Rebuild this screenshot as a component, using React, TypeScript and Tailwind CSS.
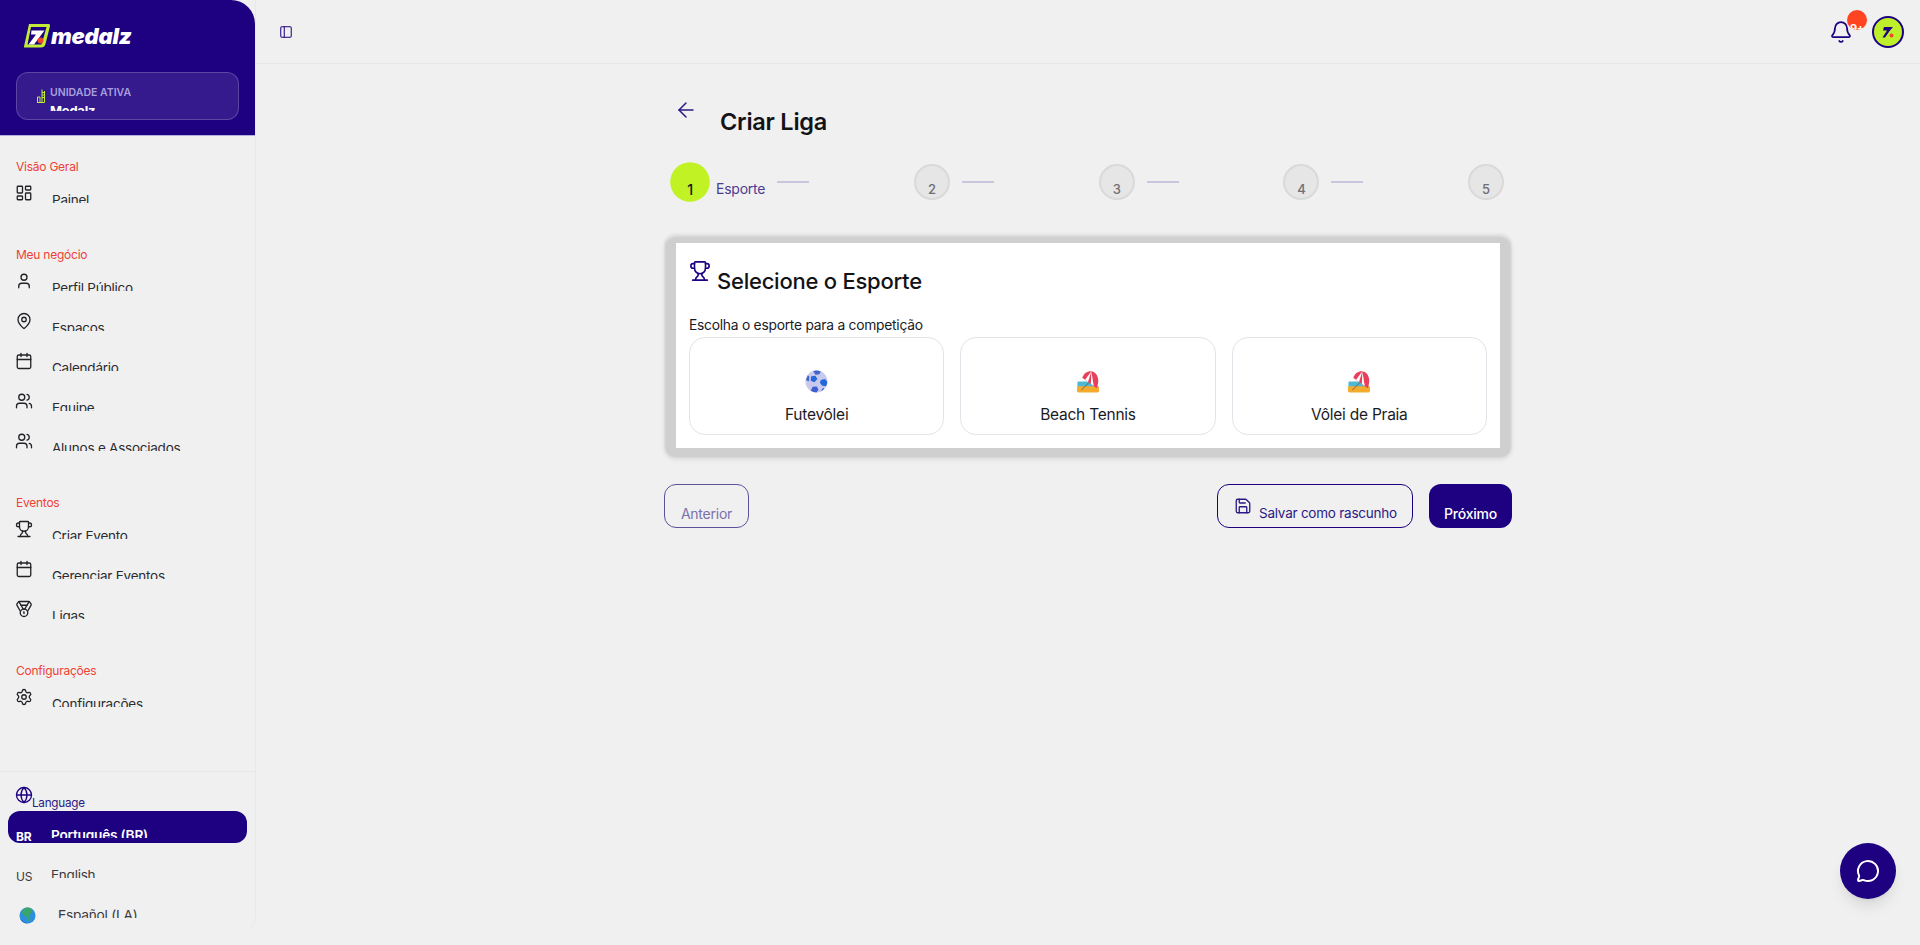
import {
  ArrowLeft,
  Bell,
  Calendar,
  Globe,
  LayoutDashboard,
  MapPin,
  Medal,
  MessageCircle,
  PanelLeft,
  Save,
  Settings,
  Trophy,
  User,
  Users,
} from "lucide-react";

const navSections = [
  { title: "Visão Geral", items: [{ label: "Painel", icon: LayoutDashboard }] },
  {
    title: "Meu negócio",
    items: [
      { label: "Perfil Público", icon: User },
      { label: "Espaços", icon: MapPin },
      { label: "Calendário", icon: Calendar },
      { label: "Equipe", icon: Users },
      { label: "Alunos e Associados", icon: Users },
    ],
  },
  {
    title: "Eventos",
    items: [
      { label: "Criar Evento", icon: Trophy },
      { label: "Gerenciar Eventos", icon: Calendar },
      { label: "Ligas", icon: Medal },
    ],
  },
  { title: "Configurações", items: [{ label: "Configurações", icon: Settings }] },
];

const LogoMark = () => (
  <svg viewBox="0 0 26 24" className="h-6 w-[26px] shrink-0">
    <path d="M5 0H24.5Q26.5 0 26 2L21.5 20Q20.5 23.5 17 23.5H0.5Q-0.3 23.5 0 22.5Z" fill="#c2ec35" />
    <path d="M7 3H22.5L20 12 17.5 20.5H3.5Z" fill="#1d0180" />
    <path d="M7.5 6.5H20.5L10 20.5H4.5L12 10.5H7Z" fill="#ffffff" />
    <circle cx="16.5" cy="16.5" r="3" fill="#f0492a" />
  </svg>
);

const BallEmoji = () => (
  <svg viewBox="0 0 24 24" className="h-[23px] w-[23px]">
    <circle cx="12" cy="12" r="11.5" fill="#c9c9ee" />
    <path d="M6.5 6.5l4.4-.6 2 3.6-3 3.2-4-1.6Z" fill="#2468dc" />
    <path d="M8.5 1a11.5 11.5 0 0 1 8 .5L15 4.4l-4 .6Z" fill="#3f63c8" />
    <path d="M16.5 10.5l4.2-1 2.5 2.5a11.5 11.5 0 0 1-1.2 5l-4-.6-2.5-3Z" fill="#2468dc" />
    <path d="M1 10.5 3 5.6l1.6 1.4-.6 5Z" fill="#3f63c8" />
    <path d="M8 17.5l4.4-.4 1.6 3.6-2 2.8a11.5 11.5 0 0 1-6-1.8Z" fill="#3f5fd0" />
    <path d="M19 18.5l-2.6 3.6a11.5 11.5 0 0 0 3.6-2.6Z" fill="#2a5fd8" />
  </svg>
);

const BeachEmoji = () => (
  <svg viewBox="0 0 24 24" className="h-[23px] w-[24px]">
    <path d="M2 12H12L23 17V18H1V13Q1 12 2 12Z" fill="#4fb8d4" />
    <rect x="0.5" y="17" width="23" height="6.5" rx="1.5" fill="#f4ac2e" />
    <path d="M13 13L5 21" stroke="#6b5a3a" strokeWidth="0.9" />
    <path d="M6 8C8 2 14 0 18 2C23 5 24 12 21 19Z" fill="#e8405a" />
    <path d="M15.5 1.3L9 10.2 12 12.4Z" fill="#ffffff" />
    <path d="M15.5 1.3L15 14.6 18 16.8Z" fill="#ffffff" />
  </svg>
);

const EarthEmoji = () => (
  <svg viewBox="0 0 18 18" className="h-[17px] w-[17px]">
    <circle cx="9" cy="9" r="8.5" fill="#2d8fe0" />
    <path d="M5 1.8Q9-.5 13 1.5L14.5 5 11 8.5 12 13 9.5 15.5 8.5 11 5 9 3 6Z" fill="#3aa56a" />
    <path d="M1 12Q5 17 10 17.5 4 18 1 12Z" fill="#1e5fb0" />
  </svg>
);

const SportCard = ({ label, emoji }: { label: string; emoji: React.ReactNode }) => (
  <button className="flex h-[98px] flex-col items-center rounded-2xl border border-[#e3e3ea] bg-white pt-[31px]">
    <div className="flex h-[24px] items-center">{emoji}</div>
    <span className="mt-[10px] text-[15.5px] leading-6 text-[#1b1b1f]">{label}</span>
  </button>
);

const Step = ({ n, label, last }: { n: number; label?: string; last?: boolean }) => (
  <div className="flex items-start">
    {n === 1 ? (
      <div className="flex h-9 w-9 scale-110 justify-center rounded-full bg-[#c0f224] pt-[15px] text-[13px] font-medium leading-5 text-[#16161a]">
        {n}
      </div>
    ) : (
      <div className="flex h-9 w-9 justify-center rounded-full border-2 border-[#d9d9d9] bg-[#e6e6e6] pt-[15px] text-[13px] font-medium leading-4 text-[#6f6f74]">
        {n}
      </div>
    )}
    {label && <span className="ml-2 mt-[15px] text-[14px] leading-5 text-[#4c3c93]">{label}</span>}
    {!last && <div className="ml-3 mt-[17px] h-0.5 w-8 bg-[#c9c6dd]" />}
  </div>
);

export default function App() {
  return (
    <div className="flex h-[945px] w-full overflow-hidden bg-[#f0f0f1] font-['Inter',sans-serif] tracking-[-0.015em]">
      <aside className="flex h-[932px] w-[256px] shrink-0 flex-col rounded-br-2xl border-r border-[#e8e8ea]">
        <div className="h-[136px] rounded-tr-3xl border-b border-[#b7aee0] bg-[#1d0180] px-4 pt-6">
          <div className="flex h-6 items-center gap-[1px] pl-2">
            <LogoMark />
            <span className="text-[22px] font-black italic leading-6 tracking-[-0.01em] text-white">medalz</span>
          </div>
          <div className="mt-6 flex h-[48px] w-[223px] rounded-xl border border-white/20 bg-white/10 pl-[20px]">
            <svg viewBox="0 0 8 14" className="mt-[16px] h-[14px] w-2 shrink-0" fill="none" stroke="#c4ef3a" strokeWidth="1">
              <path d="M5 0.5V13.5M7.5 2V13.5M0.5 13.5H7.5M0.5 8H3V13.5H0.5ZM5 3.5H7.5M5 6H7.5M5 8.5H7.5" />
            </svg>
            <div className="ml-[5px] h-[38px] overflow-hidden pt-[12px]">
              <p className="text-[10.5px] font-semibold leading-4 tracking-normal text-[#a99fdd]">UNIDADE ATIVA</p>
              <p className="text-[13px] font-bold leading-5 text-white">Medalz</p>
            </div>
          </div>
        </div>

        <nav className="px-[15px] pt-[23px]">
          {navSections.map((section, i) => (
            <div key={section.title} className={i > 0 ? "mt-11" : ""}>
              <p className="mb-2 pl-px text-xs leading-4 text-[#ef4135]">{section.title}</p>
              <div className="flex flex-col gap-5">
                {section.items.map((item) => (
                  <div key={item.label} className="flex h-5 overflow-hidden">
                    <item.icon size={18} strokeWidth={1.75} className="mt-px shrink-0 text-[#222226]" />
                    <span className="ml-[19px] mt-[7px] text-[13.5px] leading-5 text-[#2b2b30]">{item.label}</span>
                  </div>
                ))}
              </div>
            </div>
          ))}
        </nav>

        <div className="mt-auto h-[161px] border-t border-[#e6e6e8] px-2 pt-[14px]">
          <div className="flex h-[25px] pl-[7px]">
            <Globe size={18} strokeWidth={1.75} className="shrink-0 text-[#1d0180]" />
            <span className="-ml-px mt-[9px] text-[11.7px] leading-4 text-[#2a1a85]">Language</span>
          </div>
          <div className="flex h-8 rounded-xl bg-[#1d0180] pl-2">
            <span className="mt-[18px] w-[35px] text-xs font-bold leading-4 text-white">BR</span>
            <div className="h-[27px] overflow-hidden pt-[14px] text-[13.7px] font-semibold leading-5 text-white">Português (BR)</div>
          </div>
          <div className="mt-2 flex h-8 pl-2">
            <span className="mt-[18px] w-[35px] text-xs leading-4 text-[#3a3a40]">US</span>
            <div className="h-[27px] overflow-hidden pt-[14px] text-[13.5px] leading-5 text-[#3a3a40]">English</div>
          </div>
          <div className="mt-2 flex h-8 pl-[11px]">
            <div className="mt-4 w-[39px] shrink-0">
              <EarthEmoji />
            </div>
            <div className="h-[27px] overflow-hidden pt-[14px] text-[13.7px] leading-5 text-[#3a3a40]">Español (LA)</div>
          </div>
        </div>
      </aside>

      <div className="flex min-w-0 flex-1 flex-col">
        <header className="flex h-16 shrink-0 items-center justify-between border-b border-[#e6e6e8] pl-[23px] pr-4">
          <PanelLeft size={14} strokeWidth={1.75} className="text-[#1d0180]" />
          <div className="flex items-center">
            <div className="relative mr-[19px]">
              <Bell size={24} strokeWidth={1.75} className="text-[#1d0180]" />
              <span className="absolute -top-[10px] left-[18px] flex h-5 w-5 justify-center overflow-hidden rounded-full bg-[#ff4422] pt-[10px] text-[11px] font-bold leading-4 text-white">
                9+
              </span>
            </div>
            <div className="flex h-8 w-8 items-center justify-center rounded-full border-2 border-[#1d0180] bg-[#bdf02a]">
              <svg viewBox="0 0 14 14" className="h-[14px] w-[14px]">
                <path d="M3 2H12L9 5.5 4 12.5H1.5L6 5.5H2Z" fill="#1d0180" />
                <circle cx="10.5" cy="10.5" r="2" fill="#f0492a" />
              </svg>
            </div>
          </div>
        </header>

        <main className="mx-auto w-[896px] px-6 pt-6">
          <div className="flex items-start">
            <button className="flex h-11 w-11 items-center justify-center text-[#2a1a85]">
              <ArrowLeft size={24} strokeWidth={1.5} />
            </button>
            <h1 className="ml-3 mt-[18px] text-[23.5px] font-semibold leading-8 text-[#131316]">Criar Liga</h1>
          </div>

          <div className="mt-[26px] flex justify-between px-2">
            <Step n={1} label="Esporte" />
            <Step n={2} />
            <Step n={3} />
            <Step n={4} />
            <Step n={5} last />
          </div>

          <div className="mt-[33px] rounded-xl bg-[#cfcfcf] px-3 py-[10px] shadow-[0_2px_4px_rgba(0,0,0,0.08),inset_0_3px_3px_rgba(240,240,241,0.75),inset_0_0_2px_rgba(240,240,241,0.9)]">
            <div className="h-[205px] bg-white px-[13px] pt-[17px]">
              <div className="flex items-start">
                <Trophy size={22} strokeWidth={1.75} className="shrink-0 text-[#1d0180]" />
                <h2 className="ml-[6px] mt-[5px] text-[22px] font-medium leading-8 text-[#131316]">Selecione o Esporte</h2>
              </div>
              <p className="mt-[18px] text-[13.8px] leading-5 text-[#1b1b1f]">Escolha o esporte para a competição</p>
              <div className="mt-[2px] grid grid-cols-3 gap-4">
                <SportCard label="Futevôlei" emoji={<BallEmoji />} />
                <SportCard label="Beach Tennis" emoji={<BeachEmoji />} />
                <SportCard label="Vôlei de Praia" emoji={<BeachEmoji />} />
              </div>
            </div>
          </div>

          <div className="mt-[26px] flex items-start">
            <button className="h-11 w-[85px] rounded-xl border border-[#5d5299] pt-[15px] text-[14px] leading-5 text-[#7b72ab]">Anterior</button>
            <button className="ml-auto flex h-11 w-[196px] rounded-xl border border-[#1d0180] pl-[16px] pt-[12px] text-[#2a1a85]">
              <Save size={18} strokeWidth={1.75} className="shrink-0" />
              <span className="ml-[7px] mt-[6px] text-[13.5px] leading-5">Salvar como rascunho</span>
            </button>
            <button className="ml-4 h-11 w-[83px] rounded-xl bg-[#1d0180] pt-[15px] text-[14px] font-medium leading-5 text-white">Próximo</button>
          </div>
        </main>
      </div>

      <button className="fixed bottom-[46px] right-6 flex h-14 w-14 items-center justify-center rounded-full bg-[#1d0180] shadow-lg">
        <MessageCircle size={24} strokeWidth={2} className="text-white" />
      </button>
    </div>
  );
}
